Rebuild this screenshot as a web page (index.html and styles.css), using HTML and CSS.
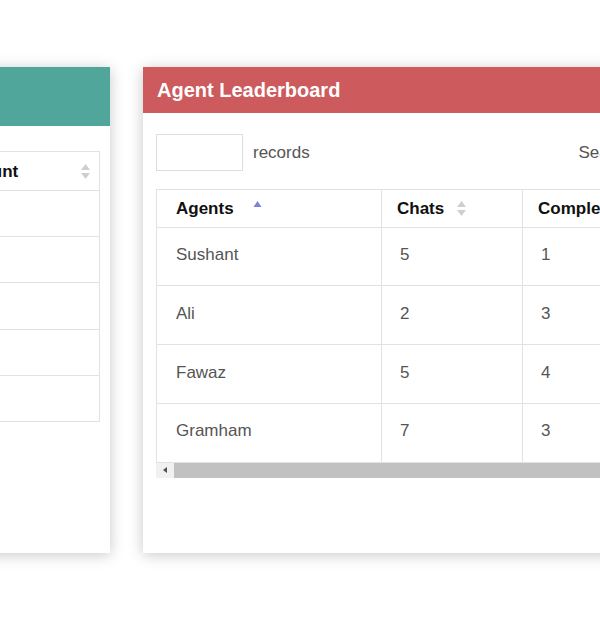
FILE: index.html
```html
<!DOCTYPE html>
<html>
<head>
<meta charset="utf-8">
<title>Agent Leaderboard</title>
<link rel="stylesheet" href="styles.css">
</head>
<body>
<div class="stage">
  <section class="card card-side">
    <header class="card-head teal"></header>
    <div class="side-body">
      <table class="grid side-grid">
        <thead>
          <tr>
            <th class="side-first"></th>
            <th class="side-amount"><span class="th-inner"><span>Amount</span><svg class="sort-icon" width="9" height="15" viewBox="0 0 9 15"><path d="M0 6 L4.5 0 L9 6 Z" fill="#cfcfcf"/><path d="M0 9 L9 9 L4.5 15 Z" fill="#cfcfcf"/></svg></span></th>
          </tr>
        </thead>
        <tbody>
          <tr><td></td><td></td></tr>
          <tr><td></td><td></td></tr>
          <tr><td></td><td></td></tr>
          <tr><td></td><td></td></tr>
          <tr><td></td><td></td></tr>
        </tbody>
      </table>
    </div>
  </section>

  <section class="card card-main">
    <header class="card-head red"><h2 class="card-title">Agent Leaderboard</h2></header>
    <div class="main-body">
      <div class="controls">
        <label class="length"><span class="box"></span><span class="ctl-text">records</span></label>
        <label class="search"><span class="ctl-text">Search:</span><span class="box search-box"></span></label>
      </div>
      <div class="scroller">
        <table class="grid main-grid">
          <colgroup>
            <col class="col-agent">
            <col class="col-num">
            <col class="col-num">
            <col class="col-rest">
          </colgroup>
          <thead>
            <tr>
              <th>Agents<svg class="sort-icon sort-asc" width="9" height="15" viewBox="0 0 9 15"><path d="M0.5 6 L4.5 0 L8.5 6 Z" fill="#7c82d6"/></svg></th>
              <th>Chats<svg class="sort-icon sort-both" width="9" height="15" viewBox="0 0 9 15"><path d="M0 6 L4.5 0 L9 6 Z" fill="#cfcfcf"/><path d="M0 9 L9 9 L4.5 15 Z" fill="#cfcfcf"/></svg></th>
              <th>Completed<svg class="sort-icon sort-both" width="9" height="15" viewBox="0 0 9 15"><path d="M0 6 L4.5 0 L9 6 Z" fill="#cfcfcf"/><path d="M0 9 L9 9 L4.5 15 Z" fill="#cfcfcf"/></svg></th>
              <th>Rating</th>
            </tr>
          </thead>
          <tbody>
            <tr><td>Sushant</td><td>5</td><td>1</td><td>4</td></tr>
            <tr><td>Ali</td><td>2</td><td>3</td><td>5</td></tr>
            <tr><td>Fawaz</td><td>5</td><td>4</td><td>4</td></tr>
            <tr><td>Gramham</td><td>7</td><td>3</td><td>3</td></tr>
          </tbody>
        </table>
        <div class="hscroll">
          <span class="arrow-btn"><svg width="4" height="6" viewBox="0 0 4 6"><path d="M4 0 L0 3 L4 6 Z" fill="#505050"/></svg></span>
          <span class="thumb"></span>
        </div>
      </div>
    </div>
  </section>
</div>
</body>
</html>
```

FILE: styles.css
```css
html, body {
  margin: 0;
  padding: 0;
  background: #ffffff;
}

body {
  width: 600px;
  height: 628px;
  overflow: hidden;
  font-family: "Liberation Sans", Arial, sans-serif;
  color: #555555;
}

.stage {
  display: flex;
  align-items: flex-start;
  gap: 33px;
  padding-top: 67px;
}

.card {
  flex: none;
  height: 486px;
  background: #ffffff;
  box-shadow: 0 2px 14px rgba(0, 0, 0, 0.22);
}

.card-side {
  width: 300px;
  margin-left: -190px;
}

.card-main {
  width: 667px;
}

.card-head {
  margin: 0;
}

.teal {
  height: 59px;
  background: #50a69b;
}

.red {
  height: 46px;
  background: #cd5a5c;
}

.card-title {
  margin: 0;
  padding-left: 14px;
  font-size: 20px;
  line-height: 46px;
  font-weight: bold;
  color: #ffffff;
}

/* tables */
.grid {
  border-collapse: collapse;
  table-layout: fixed;
  font-size: 17px;
}

.grid th,
.grid td {
  border: 1px solid #e2e2e2;
  text-align: left;
  line-height: 21px;
}

.grid th {
  color: #111111;
  font-weight: bold;
}

/* side card */
.side-body {
  padding: 25px 10px 0;
}

.side-grid {
  width: 280px;
}

.side-grid th,
.side-grid td {
  border-left: none;
  border-right: none;
}

.side-grid th:last-child,
.side-grid td:last-child {
  border-right: 1px solid #e2e2e2;
}

.side-first {
  width: 87px;
}

.side-grid th {
  padding: 9px 9px 8px 19px;
}

.side-grid td {
  padding: 12px 12px 12.2px;
  height: 21px;
}

.th-inner {
  display: flex;
  align-items: center;
  justify-content: space-between;
}

/* main card */
.main-body {
  padding: 21px 13px 0;
}

.controls {
  display: flex;
  justify-content: space-between;
  align-items: center;
  height: 37px;
}

.length,
.search {
  display: flex;
  align-items: center;
  gap: 10px;
}

.ctl-text {
  font-size: 17px;
  color: #555555;
}

.box {
  display: block;
  width: 87px;
  height: 37px;
  box-sizing: border-box;
  border: 1px solid #dddddd;
  background: #ffffff;
}

.search-box {
  width: 150px;
}

.scroller {
  margin-top: 18px;
  overflow: hidden;
}

.main-grid {
  width: 641px;
}

.col-agent {
  width: 225px;
}

.col-num {
  width: 141px;
}

.main-grid th {
  padding: 8px 15px 7.5px;
  white-space: nowrap;
}

.main-grid th:first-child {
  padding-left: 19px;
}

.main-grid td {
  padding: 16.5px 18px 20.25px;
}

.main-grid td:first-child {
  padding-left: 19px;
}

.sort-icon {
  vertical-align: -2px;
}

.sort-asc {
  margin-left: 19px;
}

.sort-both {
  margin-left: 13px;
}

.hscroll {
  display: flex;
  height: 15px;
  background: #f1f1f1;
}

.arrow-btn {
  display: flex;
  align-items: center;
  justify-content: center;
  width: 18px;
  height: 15px;
  background: #f1f1f1;
}

.thumb {
  flex: 1;
  background: #c1c1c1;
}
```
